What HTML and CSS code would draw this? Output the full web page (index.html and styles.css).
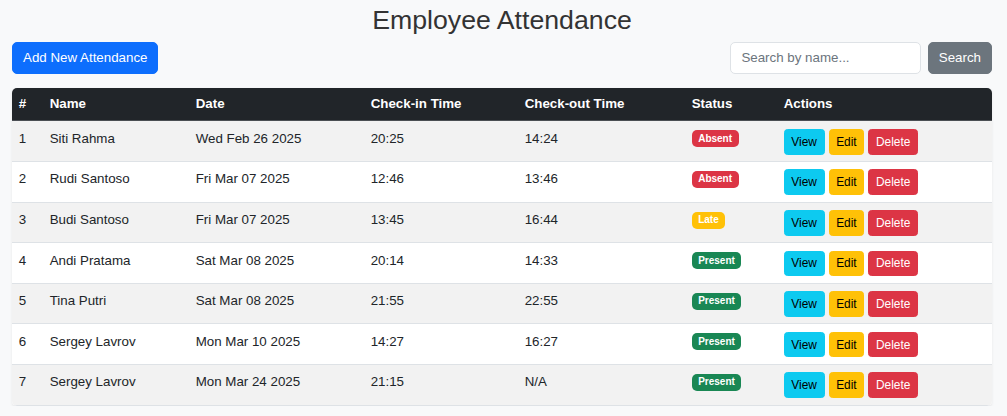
FILE: index.html
```html
<!DOCTYPE html>
<html lang="en">
<head>
<meta charset="utf-8">
<title>Employee Attendance</title>
<link rel="stylesheet" href="styles.css">
</head>
<body>
<div class="page">
  <h2 class="title">Employee Attendance</h2>
  <div class="toolbar">
    <button class="btn btn-primary">Add New Attendance</button>
    <form class="search">
      <input class="search-input" type="text" placeholder="Search by name...">
      <button class="btn btn-secondary" type="button">Search</button>
    </form>
  </div>
  <div class="table-wrap">
    <table class="att-table">
      <colgroup>
        <col class="c-num"><col class="c-name"><col class="c-date"><col class="c-in"><col class="c-out"><col class="c-status"><col class="c-actions">
      </colgroup>
      <thead>
        <tr><th>#</th><th>Name</th><th>Date</th><th>Check-in Time</th><th>Check-out Time</th><th>Status</th><th>Actions</th></tr>
      </thead>
      <tbody>
        <tr><td>1</td><td>Siti Rahma</td><td>Wed Feb 26 2025</td><td>20:25</td><td>14:24</td><td><span class="badge badge-absent">Absent</span></td><td><div class="actions"><button class="bs bs-view">View</button><button class="bs bs-edit">Edit</button><button class="bs bs-delete">Delete</button></div></td></tr>
        <tr><td>2</td><td>Rudi Santoso</td><td>Fri Mar 07 2025</td><td>12:46</td><td>13:46</td><td><span class="badge badge-absent">Absent</span></td><td><div class="actions"><button class="bs bs-view">View</button><button class="bs bs-edit">Edit</button><button class="bs bs-delete">Delete</button></div></td></tr>
        <tr><td>3</td><td>Budi Santoso</td><td>Fri Mar 07 2025</td><td>13:45</td><td>16:44</td><td><span class="badge badge-late">Late</span></td><td><div class="actions"><button class="bs bs-view">View</button><button class="bs bs-edit">Edit</button><button class="bs bs-delete">Delete</button></div></td></tr>
        <tr><td>4</td><td>Andi Pratama</td><td>Sat Mar 08 2025</td><td>20:14</td><td>14:33</td><td><span class="badge badge-present">Present</span></td><td><div class="actions"><button class="bs bs-view">View</button><button class="bs bs-edit">Edit</button><button class="bs bs-delete">Delete</button></div></td></tr>
        <tr><td>5</td><td>Tina Putri</td><td>Sat Mar 08 2025</td><td>21:55</td><td>22:55</td><td><span class="badge badge-present">Present</span></td><td><div class="actions"><button class="bs bs-view">View</button><button class="bs bs-edit">Edit</button><button class="bs bs-delete">Delete</button></div></td></tr>
        <tr><td>6</td><td>Sergey Lavrov</td><td>Mon Mar 10 2025</td><td>14:27</td><td>16:27</td><td><span class="badge badge-present">Present</span></td><td><div class="actions"><button class="bs bs-view">View</button><button class="bs bs-edit">Edit</button><button class="bs bs-delete">Delete</button></div></td></tr>
        <tr><td>7</td><td>Sergey Lavrov</td><td>Mon Mar 24 2025</td><td>21:15</td><td>N/A</td><td><span class="badge badge-present">Present</span></td><td><div class="actions"><button class="bs bs-view">View</button><button class="bs bs-edit">Edit</button><button class="bs bs-delete">Delete</button></div></td></tr>
      </tbody>
    </table>
  </div>
</div>
</body>
</html>
```

FILE: styles.css
```css
* { box-sizing: border-box; }

html, body {
  margin: 0;
  background: #f8f9fa;
  font-family: "Liberation Sans", Arial, sans-serif;
  font-size: 13.33px;
  line-height: 1.5;
  color: #212529;
}

.page {
  padding: 4px 15px 0 12px;
}

.title {
  margin: 0 0 6px;
  text-align: center;
  font-size: 26.7px;
  font-weight: 400;
  line-height: 32px;
  color: #333;
}

.toolbar {
  display: flex;
  justify-content: space-between;
  align-items: center;
  margin-bottom: 14.3px;
}

.btn {
  font-family: inherit;
  font-size: 13.33px;
  line-height: 20px;
  padding: 5px 10px;
  border: 0.83px solid transparent;
  border-radius: 5px;
  color: #fff;
  cursor: pointer;
  height: 31.7px;
}

.btn-primary { background: #0d6efd; border-color: #0d6efd; }
.btn-secondary { background: #6c757d; border-color: #6c757d; }

.search {
  display: flex;
  gap: 6.7px;
  margin: 0;
}

.search-input {
  width: 190.7px;
  height: 31.7px;
  padding: 5px 10px;
  font-family: inherit;
  font-size: 13.33px;
  line-height: 20px;
  color: #212529;
  background: #fff;
  border: 0.83px solid #dee2e6;
  border-radius: 5px;
  outline: none;
}

.search-input::placeholder { color: #6c757d; }

.table-wrap {
  border-radius: 5px;
  overflow: hidden;
  box-shadow: 0 1.5px 3px rgba(0, 0, 0, 0.075);
}

.att-table {
  width: 980px;
  table-layout: fixed;
  border-collapse: collapse;
  background: #fff;
}

.c-num { width: 31px; }
.c-name { width: 146px; }
.c-date { width: 175px; }
.c-in { width: 154px; }
.c-out { width: 167px; }
.c-status { width: 92px; }
.c-actions { width: 215px; }

.att-table th {
  background: #212529;
  color: #fff;
  font-weight: 700;
  text-align: left;
  vertical-align: top;
  padding: 6px 6.67px 6px;
  border-bottom: 1px solid #4b4f54;
  line-height: 20px;
  height: 33px;
}

.att-table td {
  vertical-align: top;
  padding: 7.4px 6.67px 6.5px;
  border-bottom: 0.83px solid #dee2e6;
  line-height: 20px;
  white-space: nowrap;
  height: 40.5px;
}

.att-table tbody tr:nth-child(odd) td { background: #f2f2f2; }

.badge {
  display: inline-block;
  padding: 3.5px 6.5px;
  font-size: 10px;
  font-weight: 700;
  line-height: 10px;
  color: #fff;
  border-radius: 5px;
  vertical-align: 1px;
}

.badge-absent { background: #dc3545; }
.badge-late { background: #ffc107; }
.badge-present { background: #198754; }

.actions {
  display: flex;
  gap: 4px;
  height: 25.7px;
}

.bs {
  font-family: inherit;
  font-size: 11.9px;
  line-height: 16px;
  height: 25.7px;
  padding: 0 6.67px;
  border: 0.83px solid transparent;
  border-radius: 3.5px;
  cursor: pointer;
}

.bs-view { background: #0dcaf0; border-color: #0dcaf0; color: #000; }
.bs-edit { background: #ffc107; border-color: #ffc107; color: #000; }
.bs-delete { background: #dc3545; border-color: #dc3545; color: #fff; }
```
